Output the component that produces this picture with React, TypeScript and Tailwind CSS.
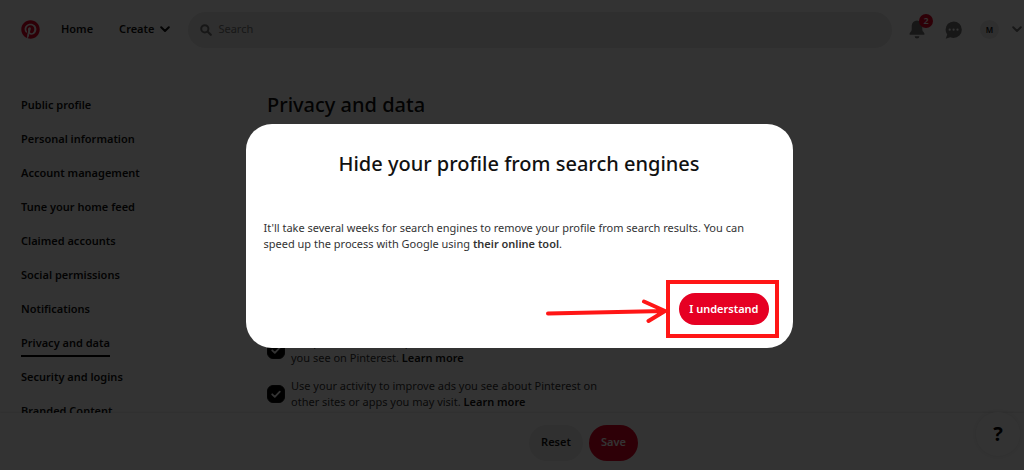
import { useState } from "react";
import { FaPinterest } from "react-icons/fa";
import clsx from "clsx";

const navItems = [
  "Public profile",
  "Personal information",
  "Account management",
  "Tune your home feed",
  "Claimed accounts",
  "Social permissions",
  "Notifications",
  "Privacy and data",
  "Security and logins",
  "Branded Content",
];

function Chevron() {
  return (
    <svg viewBox="0 0 10 7" className="h-[7px] w-2.5" fill="none" aria-hidden="true">
      <path
        d="M1.2 1.2 5 5l3.8-3.8"
        stroke="currentColor"
        strokeWidth="2"
        strokeLinecap="round"
        strokeLinejoin="round"
      />
    </svg>
  );
}

function Header() {
  return (
    <header className="flex h-[59px] shrink-0 items-center pl-[21px] font-semibold text-[#111]">
      <a href="#home" aria-label="Pinterest" className="text-[#e60023]">
        <FaPinterest className="h-[19px] w-[19px]" />
      </a>
      <a href="#home" className="ml-[21px]">
        Home
      </a>
      <button type="button" className="ml-[26px] flex items-center gap-1.5">
        Create
        <Chevron />
      </button>
      <label className="ml-[18px] flex h-9 flex-1 items-center gap-1.5 rounded-full bg-[#e9e9e9] pl-3 text-[#767676]">
        <svg viewBox="0 0 12 12" className="h-3 w-3" fill="none" aria-hidden="true">
          <circle cx="4.8" cy="4.8" r="3.6" stroke="currentColor" strokeWidth="2" />
          <path d="m7.8 7.8 3 3" stroke="currentColor" strokeWidth="2.2" strokeLinecap="round" />
        </svg>
        <input
          type="text"
          aria-label="Search"
          placeholder="Search"
          className="min-w-0 flex-1 bg-transparent font-normal outline-none placeholder:text-[#767676]"
        />
      </label>
      <button
        type="button"
        aria-label="Notifications"
        className="relative ml-[17px] text-[#767676]"
      >
        <svg viewBox="0 0 16 19" className="h-[19px] w-4" fill="currentColor" aria-hidden="true">
          <path d="M8 .5a5.3 5.3 0 0 0-5.3 5.3v3.6c0 1-.5 1.9-1.2 2.7L.6 13.2v1.6h14.8v-1.6l-.9-1.1c-.7-.8-1.2-1.7-1.2-2.7V5.8A5.3 5.3 0 0 0 8 .5ZM5.6 16.2a2.4 2.4 0 0 0 4.8 0Z" />
        </svg>
        <span className="absolute -top-1.5 left-2.5 flex h-3.5 w-3.5 items-center justify-center rounded-full bg-[#e60023] text-[9px] text-white">
          2
        </span>
      </button>
      <button type="button" aria-label="Messages" className="ml-5 text-[#767676]">
        <svg viewBox="0 0 17 18" className="h-[18px] w-[17px]" aria-hidden="true">
          <path
            d="M8.6.4a8.1 8.1 0 0 0-8 8.2c0 1.9.6 3.5 1.6 4.9L.7 17.7l4.6-1.5c1 .5 2.2.7 3.3.7a8.2 8.2 0 0 0 0-16.5Z"
            fill="currentColor"
          />
          <circle cx="4.7" cy="8.7" r="1.1" fill="#fff" />
          <circle cx="8.6" cy="8.7" r="1.1" fill="#fff" />
          <circle cx="12.5" cy="8.7" r="1.1" fill="#fff" />
        </svg>
      </button>
      <a
        href="#profile"
        aria-label="Your profile"
        className="ml-[18px] flex h-[19px] w-[19px] items-center justify-center rounded-full bg-[#e9e9e9] text-[8px]"
      >
        M
      </a>
      <button type="button" aria-label="Accounts" className="mr-0.5 ml-[13px] text-[#767676]">
        <Chevron />
      </button>
    </header>
  );
}

interface PrivacyOptionProps {
  id: string;
  text: string;
}

function PrivacyOption({ id, text }: PrivacyOptionProps) {
  const [checked, setChecked] = useState(true);

  return (
    <div className="flex items-center gap-1.5">
      <span className="relative flex">
        <input
          id={id}
          type="checkbox"
          checked={checked}
          onChange={(e) => setChecked(e.target.checked)}
          className="h-[18px] w-[18px] appearance-none rounded-md border border-[#111] checked:bg-black"
        />
        {checked && (
          <svg
            viewBox="0 0 18 18"
            className="pointer-events-none absolute inset-0"
            fill="none"
            aria-hidden="true"
          >
            <path
              d="m5.2 9.3 2.6 2.6 5-5.2"
              stroke="#fff"
              strokeWidth="1.8"
              strokeLinecap="round"
              strokeLinejoin="round"
            />
          </svg>
        )}
      </span>
      <p className="leading-4 whitespace-pre-line text-[#333]">
        <label htmlFor={id}>{text}</label>{" "}
        <a href="#learn" className="font-semibold text-[#111]">
          Learn more
        </a>
      </p>
    </div>
  );
}

function ProfileDialog() {
  return (
    <div className="fixed inset-0 flex items-center justify-center bg-black/80 pt-0.5 pl-3.5">
      <div
        role="dialog"
        aria-modal="true"
        aria-labelledby="dialog-title"
        className="w-full max-w-[547px] rounded-[26px] bg-white pt-6 pb-2.5 text-[#111]"
      >
        <h2 id="dialog-title" className="text-center text-xl leading-8 font-medium">
          Hide your profile from search engines
        </h2>
        <p className="mt-10 pr-7 pl-[18px] leading-4 text-[#333]">
          It'll take several weeks for search engines to remove your profile from search results.
          You can speed up the process with Google using{" "}
          <a href="#tool" className="font-semibold">
            their online tool
          </a>
          .
        </p>
        <div className="mt-7 flex items-center justify-end pr-3.5">
          <svg viewBox="0 0 120 30" className="h-[30px] w-[120px]" fill="none" aria-hidden="true">
            <path
              d="M2 19.5 118 17M98 7.500l21 9.500-16.500 10"
              stroke="#ff1616"
              strokeWidth="4"
              strokeLinecap="round"
              strokeLinejoin="round"
            />
          </svg>
          <div className="border-4 border-[#ff1616] py-[9px] pr-1.5 pl-[9px]">
            <button
              type="button"
              className="h-8 rounded-full bg-[#e60023] px-2.5 font-semibold text-white"
            >
              I understand
            </button>
          </div>
        </div>
      </div>
    </div>
  );
}

function App() {
  return (
    <div className="flex h-screen flex-col overflow-hidden bg-white font-['Noto_Sans','Open_Sans',sans-serif] text-[11px]">
      <Header />
      <main className="flex min-h-0 flex-1 overflow-hidden pl-[21px]">
        <nav className="w-[246px] shrink-0 pt-8 font-semibold text-[#111]">
          <ul>
            {navItems.map((item) => (
              <li key={item} className="flex h-[34px] items-start pt-1.5">
                <a
                  href="#settings"
                  className={clsx(
                    "border-b-2 pb-1 leading-4",
                    item === "Privacy and data" ? "border-black" : "border-transparent"
                  )}
                >
                  {item}
                </a>
              </li>
            ))}
          </ul>
        </nav>
        <section className="pt-[30px]">
          <h1 className="text-xl leading-8 font-medium text-[#111]">Privacy and data</h1>
          <div className="mt-[213px] flex flex-col gap-3">
            <PrivacyOption
              id="partner-info"
              text={"Use partner info to improve which recommendations and ads\nyou see on Pinterest."}
            />
            <PrivacyOption
              id="activity"
              text={"Use your activity to improve ads you see about Pinterest on\nother sites or apps you may visit."}
            />
          </div>
        </section>
      </main>
      <footer className="relative flex h-[57px] shrink-0 items-center justify-center gap-1.5 pt-0.5 pl-[143px] font-semibold shadow-[0_-1px_2px_rgba(0,0,0,0.1)]">
        <button type="button" className="h-9 rounded-full bg-[#efefef] px-3 text-[#111]">
          Reset
        </button>
        <button type="button" className="h-9 rounded-full bg-[#e60023] px-3 text-white">
          Save
        </button>
        <button
          type="button"
          aria-label="Help"
          className="absolute right-1 bottom-3.5 h-11 w-11 rounded-full bg-white text-xl font-bold text-black shadow-[0_0_6px_rgba(0,0,0,0.1)]"
        >
          ?
        </button>
      </footer>
      <ProfileDialog />
    </div>
  );
}

export default App;
